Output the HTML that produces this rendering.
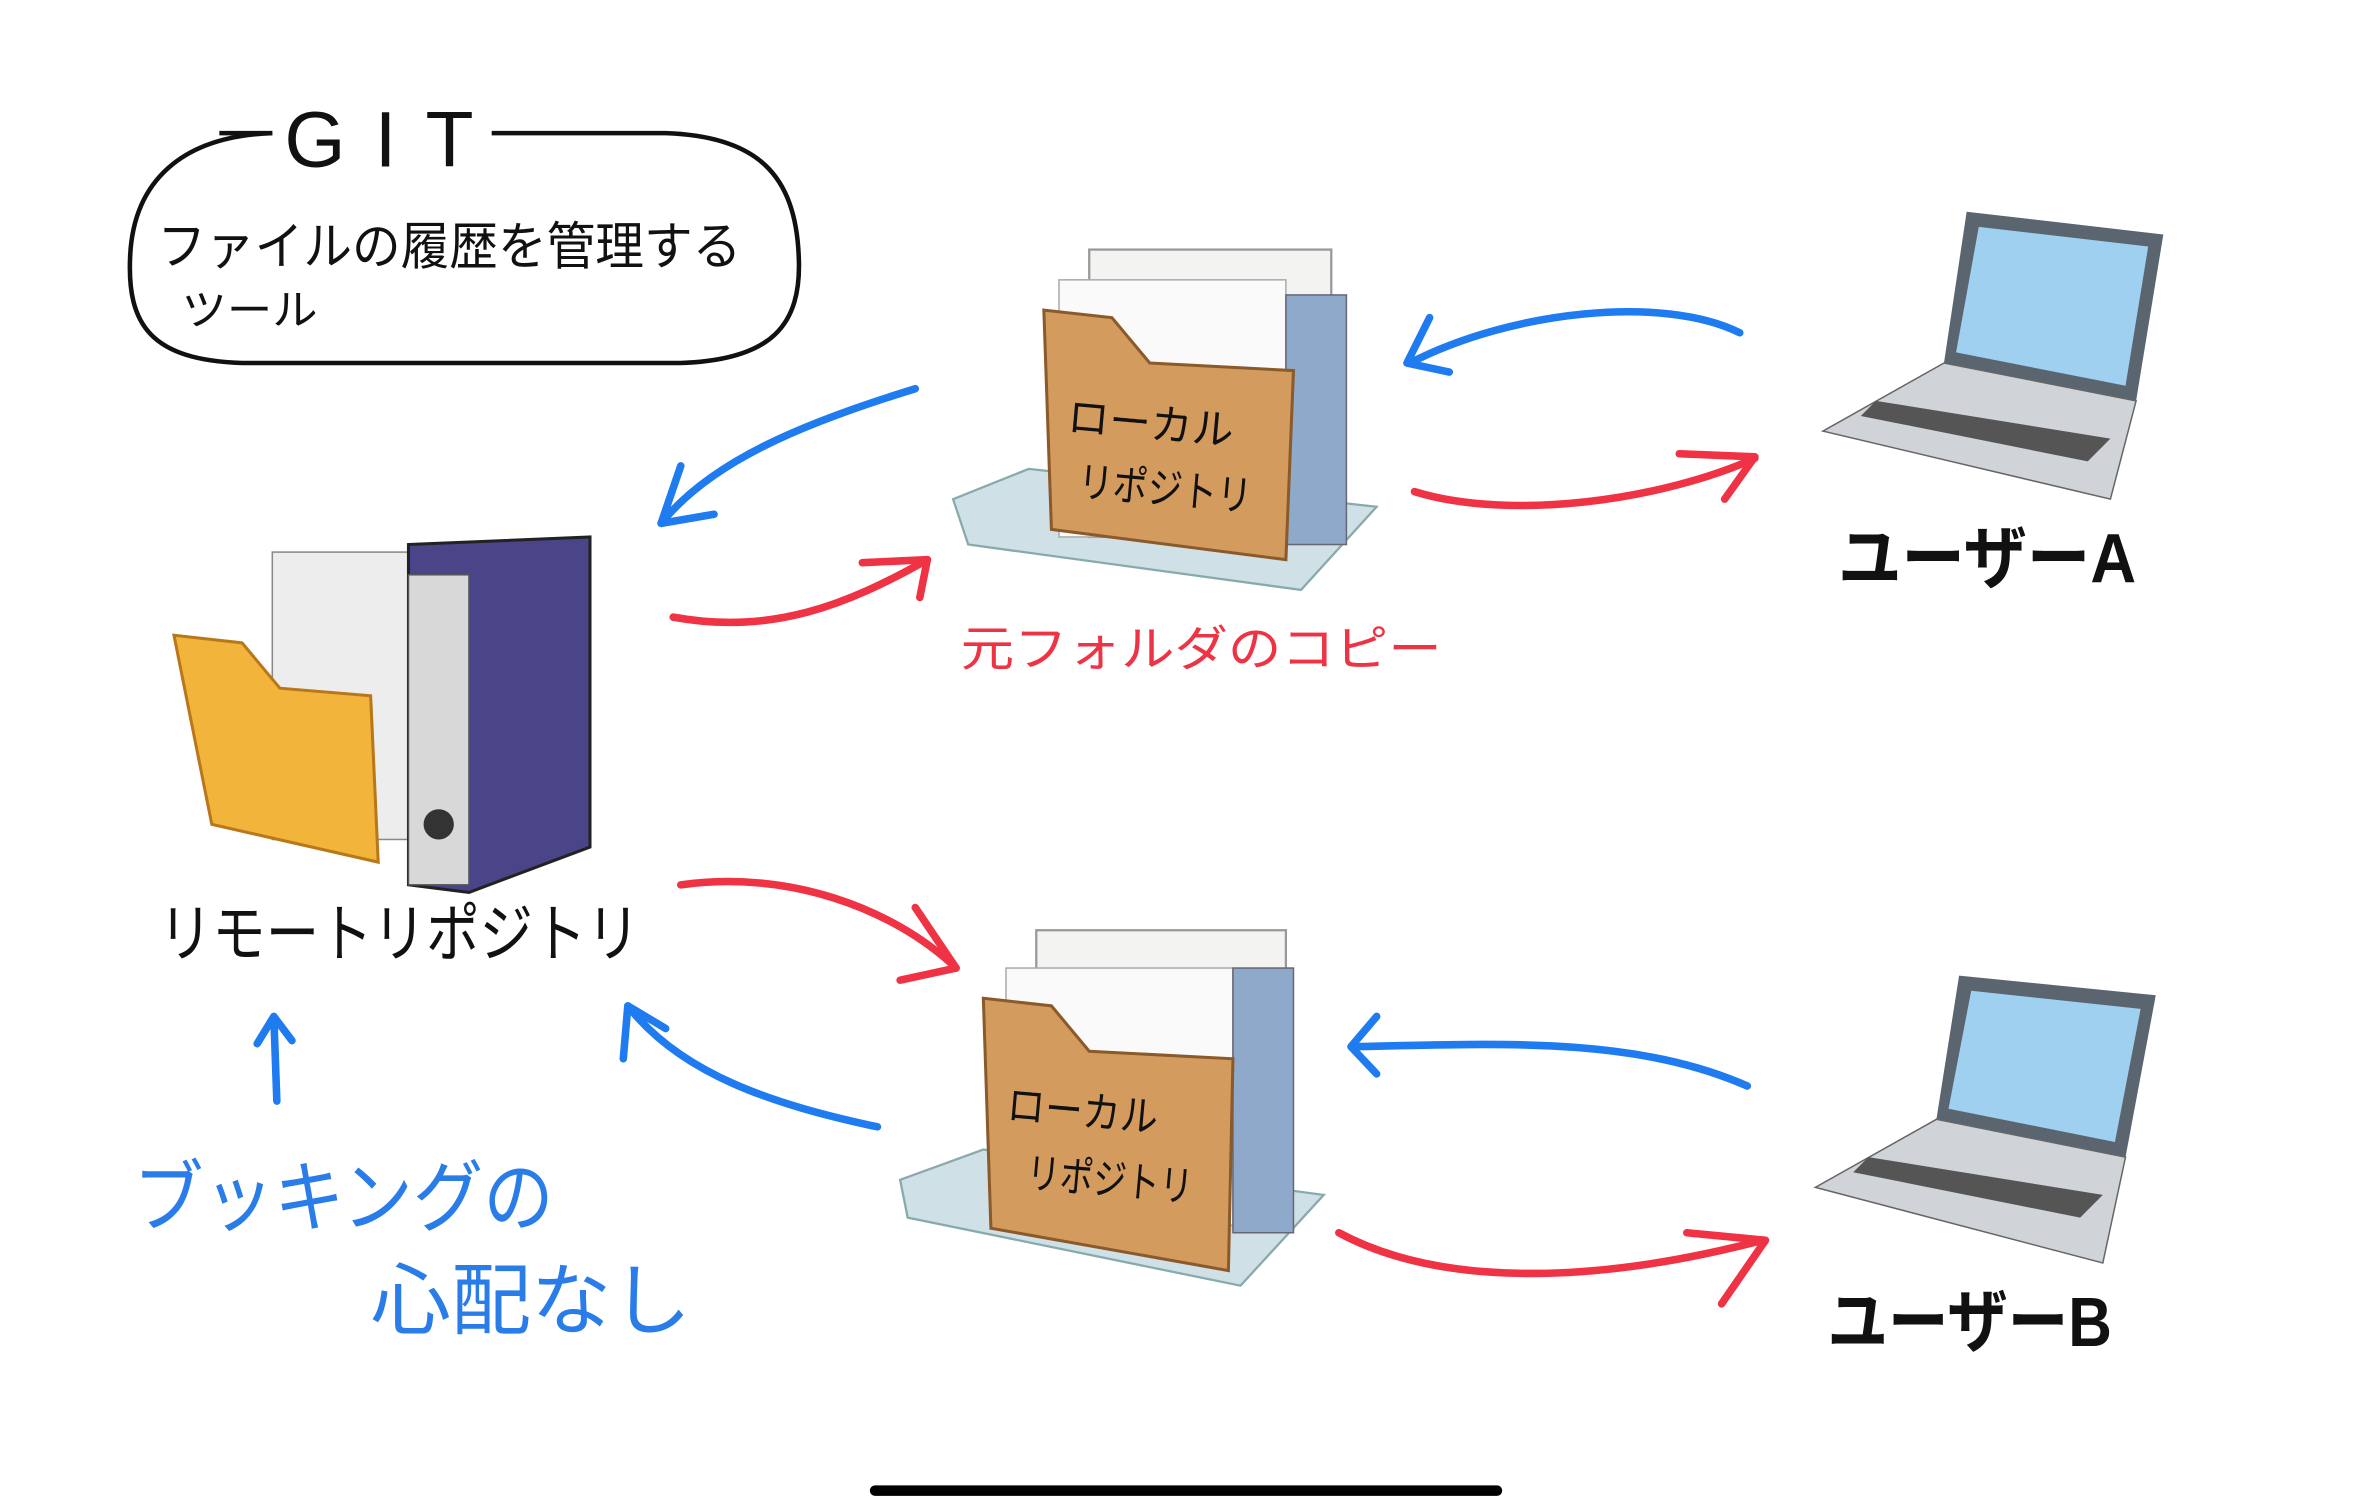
<!DOCTYPE html>
<html><head><meta charset="utf-8"><style>
html,body{margin:0;padding:0;background:#fff;}
svg{display:block;}
text{font-family:"Liberation Sans","Noto Sans CJK JP",sans-serif;}
</style></head><body>
<svg width="2360" height="1505" viewBox="0 0 1560 995" preserveAspectRatio="none" xmlns="http://www.w3.org/2000/svg">
<rect width="1560" height="995" fill="#fff"/>
<!-- GIT bubble -->
<path d="M180 88 C120 90 88 120 86 170 C84 215 100 238 160 240 L450 240 C510 238 530 215 528 170 C526 115 500 90 440 88 L325 88" fill="none" stroke="#111" stroke-width="3"/>
<line x1="145" y1="88" x2="180" y2="88" stroke="#111" stroke-width="3"/>
<text x="188" y="110" font-size="52" fill="#111" font-weight="300" textLength="125" lengthAdjust="spacing">GIT</text>
<text x="104" y="175" font-size="34" fill="#111" textLength="386" lengthAdjust="spacingAndGlyphs">ファイルの履歴を管理する</text>
<text x="120" y="215" font-size="28" fill="#111" textLength="90" lengthAdjust="spacingAndGlyphs">ツール</text>

<!-- local repo 1 -->
<g>
<polygon points="630,330 680,310 910,335 860,390 640,360" fill="#cfe0e6" stroke="#8aa" stroke-width="1.5"/>
<rect x="720" y="165" width="160" height="190" fill="#f3f3f1" stroke="#999" stroke-width="1.5"/>
<rect x="700" y="185" width="150" height="170" fill="#fafafa" stroke="#aaa"/>
<rect x="850" y="195" width="40" height="165" fill="#8ea9c9" stroke="#667"/>
<path d="M690 205 L735 210 L760 240 L855 245 L850 370 L695 350 Z" fill="#d49b5e" stroke="#8a5a2a" stroke-width="2"/>
<text x="705" y="285" font-size="28" fill="#111" transform="rotate(5 705 285)" textLength="110" lengthAdjust="spacingAndGlyphs">ローカル</text>
<text x="712" y="328" font-size="28" fill="#111" transform="rotate(5 712 328)" textLength="115" lengthAdjust="spacingAndGlyphs">リポジトリ</text>
</g>
<text x="635" y="440" font-size="32" fill="#ee3344" textLength="318" lengthAdjust="spacingAndGlyphs">元フォルダのコピー</text>

<!-- local repo 2 -->
<g>
<polygon points="595,780 650,760 875,790 820,850 600,805" fill="#cfe0e6" stroke="#8aa" stroke-width="1.5"/>
<rect x="685" y="615" width="165" height="195" fill="#f3f3f1" stroke="#999" stroke-width="1.5"/>
<rect x="665" y="640" width="150" height="170" fill="#fafafa" stroke="#aaa"/>
<rect x="815" y="640" width="40" height="175" fill="#8ea9c9" stroke="#667"/>
<path d="M650 660 L695 665 L720 695 L815 700 L812 840 L655 812 Z" fill="#d49b5e" stroke="#8a5a2a" stroke-width="2"/>
<text x="665" y="740" font-size="28" fill="#111" transform="rotate(5 665 740)" textLength="100" lengthAdjust="spacingAndGlyphs">ローカル</text>
<text x="678" y="785" font-size="28" fill="#111" transform="rotate(5 678 785)" textLength="110" lengthAdjust="spacingAndGlyphs">リポジトリ</text>
</g>

<!-- remote repo -->
<g>
<rect x="180" y="365" width="110" height="190" fill="#ededed" stroke="#888"/>
<polygon points="270,360 390,355 390,560 310,590 270,585" fill="#4a4488" stroke="#222" stroke-width="2"/>
<rect x="270" y="380" width="40" height="205" fill="#d8d8d8" stroke="#555"/>
<circle cx="290" cy="545" r="10" fill="#333"/>
<path d="M115 420 L160 425 L185 455 L245 460 L250 570 L140 545 Z" fill="#f2b43a" stroke="#b8781a" stroke-width="2"/>
</g>
<text x="105" y="632" font-size="42" fill="#111" textLength="318" lengthAdjust="spacingAndGlyphs">リモートリポジトリ</text>

<!-- laptops -->
<g>
<polygon points="1300,140 1430,155 1412,265 1285,240" fill="#5a6570"/>
<polygon points="1308,150 1420,163 1405,255 1293,233" fill="#9fd0f0"/>
<polygon points="1285,240 1412,265 1395,330 1205,285" fill="#d0d4d8" stroke="#666"/>
<polygon points="1240,265 1395,290 1380,305 1230,275" fill="#555"/>
</g>
<text x="1215" y="385" font-size="46" font-weight="bold" fill="#111" textLength="197" lengthAdjust="spacingAndGlyphs">ユーザーA</text>
<g>
<polygon points="1295,645 1425,658 1405,765 1280,740" fill="#5a6570"/>
<polygon points="1303,655 1415,667 1398,755 1288,733" fill="#9fd0f0"/>
<polygon points="1280,740 1405,765 1390,835 1200,785" fill="#d0d4d8" stroke="#666"/>
<polygon points="1235,765 1390,790 1375,805 1225,775" fill="#555"/>
</g>
<text x="1208" y="890" font-size="46" font-weight="bold" fill="#111" textLength="188" lengthAdjust="spacingAndGlyphs">ユーザーB</text>

<!-- blue text -->
<text x="88" y="810" font-size="52" fill="#2a7de8" textLength="278" lengthAdjust="spacingAndGlyphs">ブッキングの</text>
<text x="245" y="878" font-size="52" fill="#2a7de8" textLength="212" lengthAdjust="spacingAndGlyphs">心配なし</text>

<!-- arrows -->
<g fill="none" stroke-width="5" stroke-linecap="round" stroke-linejoin="round">
<path d="M605 257 C530 280 470 305 437 346" stroke="#1f7bf0"/>
<path d="M450 308 L437 346 L472 340" stroke="#1f7bf0"/>
<path d="M445 408 C510 420 560 400 613 370" stroke="#f03245"/>
<path d="M570 372 L613 370 L608 395" stroke="#f03245"/>
<path d="M1150 220 C1100 195 1000 205 932 240" stroke="#1f7bf0"/>
<path d="M945 210 L930 240 L958 246" stroke="#1f7bf0"/>
<path d="M935 325 C1000 345 1100 330 1160 303" stroke="#f03245"/>
<path d="M1110 300 L1160 302 L1140 330" stroke="#f03245"/>
<path d="M450 585 C520 575 590 600 632 640" stroke="#f03245"/>
<path d="M605 600 L632 640 L595 648" stroke="#f03245"/>
<path d="M580 745 C510 730 450 710 415 665" stroke="#1f7bf0"/>
<path d="M412 700 L415 665 L440 680" stroke="#1f7bf0"/>
<path d="M1155 718 C1080 685 990 690 895 692" stroke="#1f7bf0"/>
<path d="M910 672 L893 692 L910 710" stroke="#1f7bf0"/>
<path d="M885 815 C950 850 1050 850 1165 820" stroke="#f03245"/>
<path d="M1115 815 L1167 820 L1138 862" stroke="#f03245"/>
<path d="M183 728 L181 672 M170 690 L181 672 L193 688" stroke="#1f7bf0"/>
</g>

<!-- home indicator -->
<rect x="575" y="982" width="418" height="7" rx="3.5" fill="#000"/>
</svg>
</body></html>
